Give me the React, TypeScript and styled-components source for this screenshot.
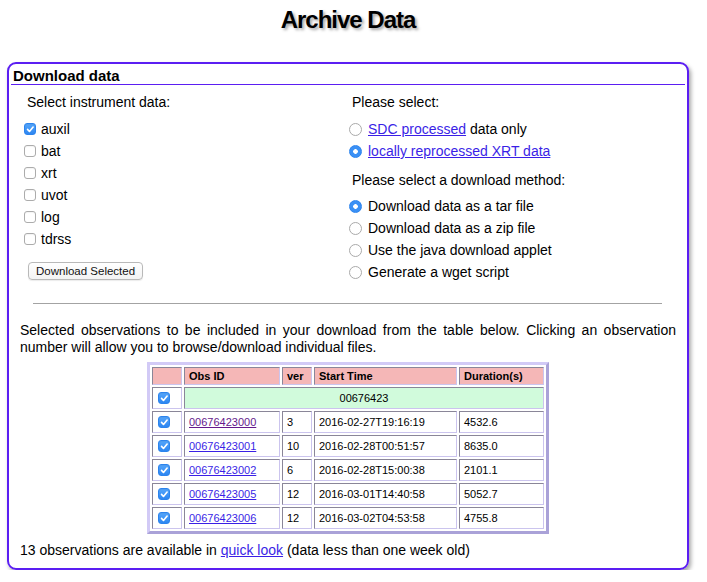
import React from "react";
import styled, { createGlobalStyle } from "styled-components";

const GlobalStyle = createGlobalStyle`
  html, body {
    margin: 0;
    padding: 0;
    background: #fff;
  }
  body {
    font-family: "Liberation Sans", Arial, Helvetica, sans-serif;
    color: #000;
  }
`;

const checkMark =
  "url(\"data:image/svg+xml;utf8,<svg xmlns='http://www.w3.org/2000/svg' viewBox='0 0 12 12'><path d='M3.2 6.2l2 2.1 3.8-4.6' fill='none' stroke='white' stroke-width='1.7' stroke-linecap='round' stroke-linejoin='round'/></svg>\")";

const Page = styled.div`
  width: 682px;
  margin-left: 7px;
  padding-top: 6px;
`;

const Title = styled.h1`
  margin: 0 0 28px;
  text-align: center;
  font-size: 24px;
  line-height: 28px;
  letter-spacing: -1px;
  font-weight: bold;
  text-shadow: 2px 2px 3px rgba(0, 0, 0, 0.35);
`;

const Panel = styled.section`
  border: 2px solid #5b1ef2;
  border-radius: 9px;
  box-shadow: 2px 3px 4px rgba(0, 0, 0, 0.35);
  padding: 0 0 9px;
`;

const PanelHeading = styled.h2`
  margin: 0 2px;
  padding: 4px 0 0 2px;
  font-size: 15px;
  line-height: 16px;
  font-weight: bold;
  border-bottom: 1px solid #5b1ef2;
`;

const OptionsGrid = styled.div`
  display: grid;
  grid-template-columns: 325px 1fr;
  margin-top: 8px;
  padding-left: 15px;
`;

const Column = styled.div`
  display: flex;
  flex-direction: column;
  align-items: flex-start;
`;

const ColumnLabel = styled.div<{ $gap?: number }>`
  margin-top: ${(p) => p.$gap ?? 0}px;
  padding-left: 3px;
  font-size: 14px;
  line-height: 18px;
`;

const ChoiceList = styled.div<{ $gap: number }>`
  display: flex;
  flex-direction: column;
  margin-top: ${(p) => p.$gap}px;
`;

const Choice = styled.label<{ $gap: number }>`
  display: flex;
  align-items: center;
  gap: ${(p) => p.$gap}px;
  height: 22px;
  font-size: 14px;
  line-height: 18px;
  white-space: nowrap;
`;

const CheckBox = styled.input.attrs({ type: "checkbox" })`
  appearance: none;
  box-sizing: border-box;
  flex: none;
  display: block;
  margin: 0;
  width: 12px;
  height: 12px;
  border: 1px solid #acacac;
  border-radius: 3px;
  background: #fff;
  box-shadow: inset 0 1px 1px rgba(0, 0, 0, 0.05);

  &:checked {
    border-color: #2c84ee;
    background: ${checkMark} center / 11px 11px no-repeat,
      linear-gradient(#55a6fb, #2d86f1);
  }
`;

const Radio = styled.input.attrs({ type: "radio" })`
  appearance: none;
  box-sizing: border-box;
  flex: none;
  margin: 0;
  width: 13px;
  height: 13px;
  border: 1px solid #aaaaaa;
  border-radius: 50%;
  background: #fff;

  &:checked {
    border-color: #2c84ee;
    background: radial-gradient(circle, #fff 0 2px, #3a90f5 2.6px);
  }
`;

const SmallButton = styled.button`
  margin: 12px 0 0 4px;
  height: 18px;
  padding: 0 7px;
  font-family: "Liberation Sans", Arial, sans-serif;
  font-size: 11.5px;
  color: #111;
  background: linear-gradient(#fff, #f3f3f3);
  border: 1px solid #b9b9b9;
  border-radius: 4px;
  box-shadow: 0 1px 1px rgba(0, 0, 0, 0.08);
`;

const Link = styled.a<{ $visited?: boolean }>`
  color: ${(p) => (p.$visited ? "#65198c" : "#3a1fe6")};
  text-decoration: underline;
`;

const Divider = styled.hr`
  margin: 20px 25px 0 24px;
  height: 0;
  border: 0;
  border-top: 1px solid #a3a3a3;
`;

const Intro = styled.p`
  margin: 18px 11px 0;
  font-size: 14px;
  line-height: 17px;
  text-align: justify;
`;

const ObsTable = styled.table`
  margin: 6px auto 0;
  width: 402px;
  table-layout: fixed;
  border-collapse: separate;
  border-spacing: 2px;
  border: 3px solid;
  border-color: #d2caf6 #aaa2d8 #aaa2d8 #d2caf6;
  font-size: 11px;
`;

const HeadCell = styled.th<{ $w: number }>`
  box-sizing: border-box;
  width: ${(p) => p.$w}px;
  padding: 1px 4px;
  line-height: 14px;
  text-align: left;
  font-weight: bold;
  background: #f5b7b7;
  border: 1px solid;
  border-color: #8a8698 #cbc4ee #cbc4ee #8a8698;
`;

const BodyCell = styled.td<{ $group?: boolean }>`
  box-sizing: border-box;
  height: 22px;
  padding: 3px 4px;
  line-height: 14px;
  text-align: ${(p) => (p.$group ? "center" : "left")};
  background: ${(p) => (p.$group ? "#d1fbdc" : "#fff")};
  border: 1px solid;
  border-color: #8a8698 #cbc4ee #cbc4ee #8a8698;
  white-space: nowrap;
`;

const CellCheck = styled(CheckBox)`
  margin-left: 1px;
`;

const Footnote = styled.p`
  margin: 8px 11px 0;
  font-size: 14px;
  line-height: 17px;
`;

const instruments = [
  { name: "auxil", checked: true },
  { name: "bat" },
  { name: "xrt" },
  { name: "uvot" },
  { name: "log" },
  { name: "tdrss" },
];

const methods = [
  "Download data as a tar file",
  "Download data as a zip file",
  "Use the java download applet",
  "Generate a wget script",
];

const observations = [
  { id: "00676423000", ver: "3", start: "2016-02-27T19:16:19", dur: "4532.6", visited: true },
  { id: "00676423001", ver: "10", start: "2016-02-28T00:51:57", dur: "8635.0" },
  { id: "00676423002", ver: "6", start: "2016-02-28T15:00:38", dur: "2101.1" },
  { id: "00676423005", ver: "12", start: "2016-03-01T14:40:58", dur: "5052.7" },
  { id: "00676423006", ver: "12", start: "2016-03-02T04:53:58", dur: "4755.8" },
];

export default function App() {
  return (
    <Page>
      <GlobalStyle />
      <Title>Archive Data</Title>
      <Panel>
        <PanelHeading>Download data</PanelHeading>
        <OptionsGrid>
          <Column>
            <ColumnLabel>Select instrument data:</ColumnLabel>
            <ChoiceList $gap={7}>
              {instruments.map((i) => (
                <Choice key={i.name} $gap={5}>
                  <CheckBox defaultChecked={!!i.checked} />
                  {i.name}
                </Choice>
              ))}
            </ChoiceList>
            <SmallButton>Download Selected</SmallButton>
          </Column>
          <Column>
            <ColumnLabel>Please select:</ColumnLabel>
            <ChoiceList $gap={7}>
              <Choice $gap={6}>
                <Radio name="proc" />
                <span>
                  <Link href="#">SDC processed</Link> data only
                </span>
              </Choice>
              <Choice $gap={6}>
                <Radio name="proc" defaultChecked />
                <Link href="#">locally reprocessed XRT data</Link>
              </Choice>
            </ChoiceList>
            <ColumnLabel $gap={9}>Please select a download method:</ColumnLabel>
            <ChoiceList $gap={6}>
              {methods.map((m, idx) => (
                <Choice key={m} $gap={6}>
                  <Radio name="method" defaultChecked={idx === 0} />
                  {m}
                </Choice>
              ))}
            </ChoiceList>
          </Column>
        </OptionsGrid>
        <Divider />
        <Intro>
          Selected observations to be included in your download from the table below.
          Clicking an observation number will allow you to browse/download individual files.
        </Intro>
        <ObsTable>
          <thead>
            <tr>
              <HeadCell $w={30} />
              <HeadCell $w={96}>Obs ID</HeadCell>
              <HeadCell $w={30}>ver</HeadCell>
              <HeadCell $w={143}>Start Time</HeadCell>
              <HeadCell $w={85}>Duration(s)</HeadCell>
            </tr>
          </thead>
          <tbody>
            <tr>
              <BodyCell>
                <CellCheck defaultChecked />
              </BodyCell>
              <BodyCell $group colSpan={4}>
                00676423
              </BodyCell>
            </tr>
            {observations.map((o) => (
              <tr key={o.id}>
                <BodyCell>
                  <CellCheck defaultChecked />
                </BodyCell>
                <BodyCell>
                  <Link href="#" $visited={o.visited}>
                    {o.id}
                  </Link>
                </BodyCell>
                <BodyCell>{o.ver}</BodyCell>
                <BodyCell>{o.start}</BodyCell>
                <BodyCell>{o.dur}</BodyCell>
              </tr>
            ))}
          </tbody>
        </ObsTable>
        <Footnote>
          13 observations are available in <Link href="#">quick look</Link> (data less
          than one week old)
        </Footnote>
      </Panel>
    </Page>
  );
}
